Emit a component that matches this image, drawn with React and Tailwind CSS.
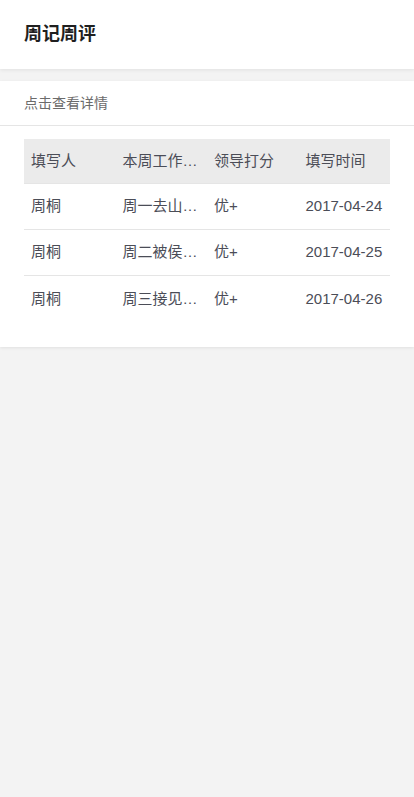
const rows = [
  { name: "周桐", work: "周一去山东出差", score: "优+", date: "2017-04-24" },
  { name: "周桐", work: "周二被侯亮平约谈", score: "优+", date: "2017-04-25" },
  { name: "周桐", work: "周三接见外宾", score: "优+", date: "2017-04-26" },
];

const font = { fontFamily: '"Liberation Sans", "Noto Sans CJK SC", sans-serif' };

export default function App() {
  return (
    <div className="min-h-[797px] bg-[#f3f3f3]" style={font}>
      {/* header */}
      <div className="h-[69px] bg-white flex items-center px-6 shadow-[0_1px_4px_rgba(0,0,0,0.08)]">
        <h1 className="text-[18px] font-bold text-[#1f1f1f]">周记周评</h1>
      </div>

      {/* card */}
      <div className="mt-3 bg-white shadow-[0_1px_3px_rgba(0,0,0,0.08)] pb-[25px]">
        <div className="h-[45px] flex items-center px-6 border-b border-[#e5e5e5] text-[14px] text-[#6b6b6b]">
          点击查看详情
        </div>

        <div className="mx-6 mt-[13px]">
          <div className="grid grid-cols-4 h-[45px] items-center bg-[#ebebeb] text-[15px] text-[#4b4d57] border-b border-[#e5e5e5]">
            <div className="px-[7px] truncate">填写人</div>
            <div className="px-[7px] truncate">本周工作总结</div>
            <div className="px-[7px] truncate">领导打分</div>
            <div className="px-[7px] truncate">填写时间</div>
          </div>
          {rows.map((r, i) => (
            <div
              key={i}
              className={
                "grid grid-cols-4 h-[46px] items-center text-[15px] text-[#4b4d57] " +
                (i < rows.length - 1 ? "border-b border-[#e5e5e5]" : "")
              }
            >
              <div className="px-[7px] truncate">{r.name}</div>
              <div className="pl-[7px] pr-[6px] truncate">{r.work}</div>
              <div className="px-[7px] truncate">{r.score}</div>
              <div className="pl-[7px] whitespace-nowrap">{r.date}</div>
            </div>
          ))}
        </div>
      </div>
    </div>
  );
}
